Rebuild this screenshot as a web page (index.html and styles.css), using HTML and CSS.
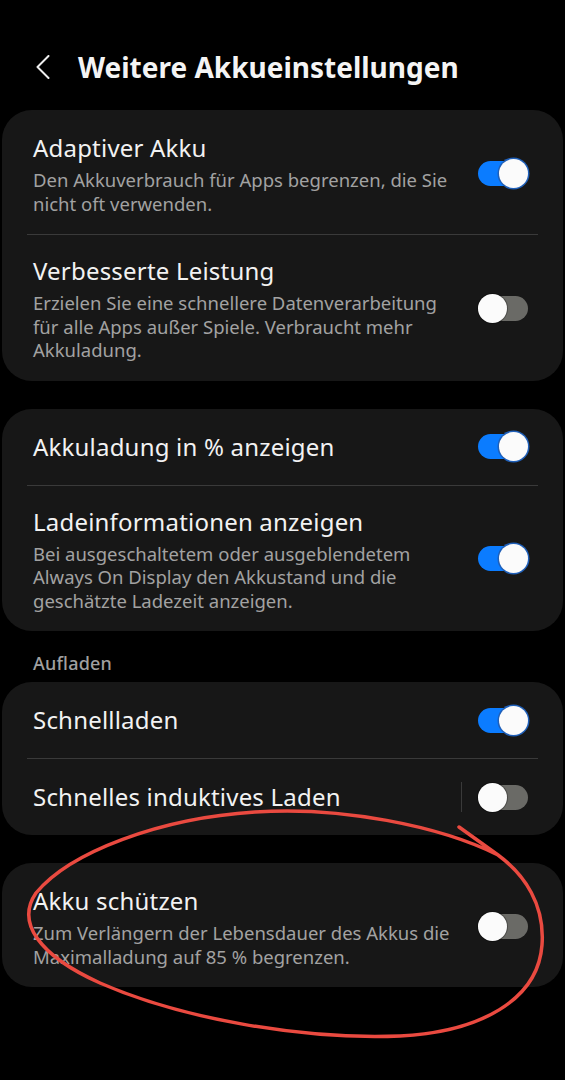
FILE: index.html
```html
<!DOCTYPE html>
<html lang="de">
<head>
  <meta charset="UTF-8">
  <meta name="viewport" content="width=device-width, initial-scale=1.0">
  <title>Weitere Akkueinstellungen</title>
  <link rel="stylesheet" href="styles.css">
</head>
<body>

  <header class="topbar">
    <svg class="back" width="14" height="24" viewBox="0 0 14 24">
      <path d="M12.5 1 L1.5 12 L12.5 23" fill="none" stroke="#eeeeee" stroke-width="2" stroke-linecap="round" stroke-linejoin="round"/>
    </svg>
    <h1>Weitere Akkueinstellungen</h1>
  </header>

  <div class="card">
    <div class="row">
      <div class="text">
        <div class="title">Adaptiver Akku</div>
        <div class="desc">Den Akkuverbrauch für Apps begrenzen, die Sie nicht oft verwenden.</div>
      </div>
      <div class="switch on"><span class="thumb"></span></div>
    </div>
    <div class="divider"></div>
    <div class="row">
      <div class="text">
        <div class="title">Verbesserte Leistung</div>
        <div class="desc">Erzielen Sie eine schnellere Datenverarbeitung für alle Apps außer Spiele. Verbraucht mehr Akkuladung.</div>
      </div>
      <div class="switch"><span class="thumb"></span></div>
    </div>
  </div>

  <div class="card">
    <div class="row single">
      <div class="text">
        <div class="title">Akkuladung in % anzeigen</div>
      </div>
      <div class="switch on"><span class="thumb"></span></div>
    </div>
    <div class="divider"></div>
    <div class="row">
      <div class="text">
        <div class="title">Ladeinformationen anzeigen</div>
        <div class="desc">Bei ausgeschaltetem oder ausgeblendetem Always On Display den Akkustand und die geschätzte Ladezeit anzeigen.</div>
      </div>
      <div class="switch on"><span class="thumb"></span></div>
    </div>
  </div>

  <div class="section-label">Aufladen</div>

  <div class="card">
    <div class="row single">
      <div class="text">
        <div class="title">Schnellladen</div>
      </div>
      <div class="switch on"><span class="thumb"></span></div>
    </div>
    <div class="divider"></div>
    <div class="row single">
      <div class="text">
        <div class="title">Schnelles induktives Laden</div>
      </div>
      <span class="vline"></span>
      <div class="switch"><span class="thumb"></span></div>
    </div>
  </div>

  <div class="card">
    <div class="row">
      <div class="text">
        <div class="title">Akku schützen</div>
        <div class="desc">Zum Verlängern der Lebensdauer des Akkus die Maximalladung auf 85 % begrenzen.</div>
      </div>
      <div class="switch"><span class="thumb"></span></div>
    </div>
  </div>

  <!-- roter Kreis, von Hand über den Screenshot gemalt -->
  <svg class="scribble" width="565" height="1080" viewBox="0 0 565 1080">
    <path d="M498 855 C440 826 340 806 255 812 C160 818 70 852 36 893 C16 922 38 955 100 983 C180 1018 300 1040 400 1036 C480 1032 538 1000 542 945 C545 905 525 875 498 855 M459 827 L498 855"
      fill="none" stroke="#ea4a40" stroke-width="3.5" stroke-linecap="round" stroke-linejoin="round"/>
  </svg>

</body>
</html>
```

FILE: styles.css
```css
* {
  margin: 0;
  padding: 0;
  box-sizing: border-box;
}

body {
  font-family: "Noto Sans", Roboto, sans-serif;
  background-color: #000;
  color: #f2f2f2;
  position: relative;
  min-height: 1080px;
}

.topbar {
  display: flex;
  align-items: center;
  height: 110px;
  padding: 32px 0 8px 36px;
}

.topbar .back {
  display: block;
}

.topbar h1 {
  margin-left: 28px;
  font-size: 28px;
  line-height: 36px;
  font-weight: 700;
  color: #f4f4f4;
}

.card {
  background-color: #171717;
  border-radius: 30px;
  margin: 0 2px 28px;
}

.row {
  display: flex;
  align-items: center;
  padding: 20px 35px 19px 31px;
}

.row:first-child {
  padding-top: 22px;
}

.row.single {
  height: 76px;
  padding-top: 0;
  padding-bottom: 0;
}

.text {
  flex: 1;
  padding-right: 18px;
}

.title {
  font-size: 24px;
  line-height: 32px;
  letter-spacing: 0.2px;
  color: #f2f2f2;
}

.desc {
  margin-top: 4px;
  font-size: 18.5px;
  line-height: 23.5px;
  color: #a2a2a2;
}

.divider {
  height: 1px;
  margin: 0 25px;
  background-color: #3a3a3a;
}

.vline {
  width: 1px;
  height: 30px;
  margin-right: 16px;
  background-color: #3a3a3a;
}

.switch {
  display: flex;
  align-items: center;
  justify-content: flex-start;
  flex-shrink: 0;
  width: 50px;
  height: 25px;
  border-radius: 13px;
  background-color: #6a6a66;
}

.switch.on {
  justify-content: flex-end;
  background-color: #0b7cff;
}

.thumb {
  width: 29px;
  height: 29px;
  flex-shrink: 0;
  border-radius: 50%;
  background-color: #fbfbfb;
  box-shadow: 0 0 0 1px rgba(0, 0, 0, 0.3);
}

.switch.on .thumb {
  box-shadow: 0 0 0 1.5px #1f5fb8;
}

.section-label {
  margin: -8px 0 7px;
  padding-left: 33px;
  font-size: 18px;
  line-height: 24px;
  font-weight: 500;
  letter-spacing: 0.2px;
  color: #a0a0a0;
}

.scribble {
  position: absolute;
  top: 0;
  left: 0;
  pointer-events: none;
}
```
